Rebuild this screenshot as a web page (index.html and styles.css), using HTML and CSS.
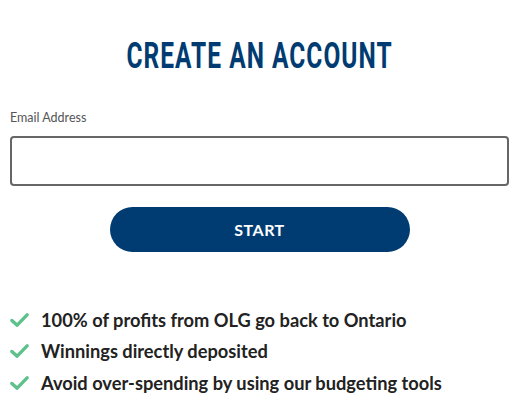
FILE: index.html
```html
<!DOCTYPE html>
<html>
<head>
  <meta charset="utf-8">
  <meta name="viewport" content="width=device-width,initial-scale=1">
  <title>Create an account</title>
  <link rel="stylesheet" href="styles.css">
</head>
<body>
  <section class="signup">
    <h1><span class="title">Create an account</span></h1>

    <form class="form">
      <label class="label" for="email">Email Address</label>
      <input class="field" type="email" id="email">
      <button class="start" type="submit">START</button>
    </form>

    <ul class="perks">
      <li>
        <svg class="check" viewBox="0 0 20 16"><path d="M2 8.5 L7.5 13.5 L18 2.5"/></svg>
        100% of profits from OLG go back to Ontario
      </li>
      <li>
        <svg class="check" viewBox="0 0 20 16"><path d="M2 8.5 L7.5 13.5 L18 2.5"/></svg>
        Winnings directly deposited
      </li>
      <li>
        <svg class="check" viewBox="0 0 20 16"><path d="M2 8.5 L7.5 13.5 L18 2.5"/></svg>
        Avoid over-spending by using our budgeting tools
      </li>
    </ul>
  </section>
</body>
</html>
```

FILE: styles.css
```css
html, body {
  margin: 0;
  padding: 0;
}

* {
  box-sizing: border-box;
}

body {
  background: #fff;
  color: #222;
  font-family: Lato, "Open Sans", sans-serif;
}

.signup {
  padding: 36px 9px 0 10px;
}

h1 {
  color: #003c71;
  font-family: Roboto, sans-serif;
  font-size: 36px;
  font-weight: 700;
  letter-spacing: 1.5px;
  line-height: 40px;
  margin: 0;
  text-align: center;
  text-transform: uppercase;
}

/* no condensed face on hand, so squeeze the regular one */
.title {
  display: inline-block;
  transform: scaleX(0.68);
}

.form {
  display: flex;
  flex-direction: column;
  margin-top: 34px;
}

.label {
  color: #555;
  font-size: 12.5px;
  line-height: 15px;
}

.field {
  border: 2px solid #666;
  border-radius: 4px;
  height: 50px;
  margin-top: 11px;
  width: 100%;
}

.start {
  align-self: center;
  background: #003c71;
  border: 0;
  border-radius: 23px;
  color: #fff;
  font-family: Lato, sans-serif;
  font-size: 16px;
  font-weight: 700;
  height: 45px;
  letter-spacing: .5px;
  margin-top: 21px;
  width: 300px;
}

.perks {
  list-style: none;
  margin: 52px 0 0;
  padding: 0;
}

.perks li {
  align-items: center;
  display: flex;
  font-size: 18.25px;
  font-weight: 700;
  gap: 12px;
  height: 31.5px;
}

.check {
  fill: none;
  height: 16px;
  stroke: #5cc18b;
  stroke-linecap: round;
  stroke-linejoin: round;
  stroke-width: 3.5;
  width: 19px;
}
```
